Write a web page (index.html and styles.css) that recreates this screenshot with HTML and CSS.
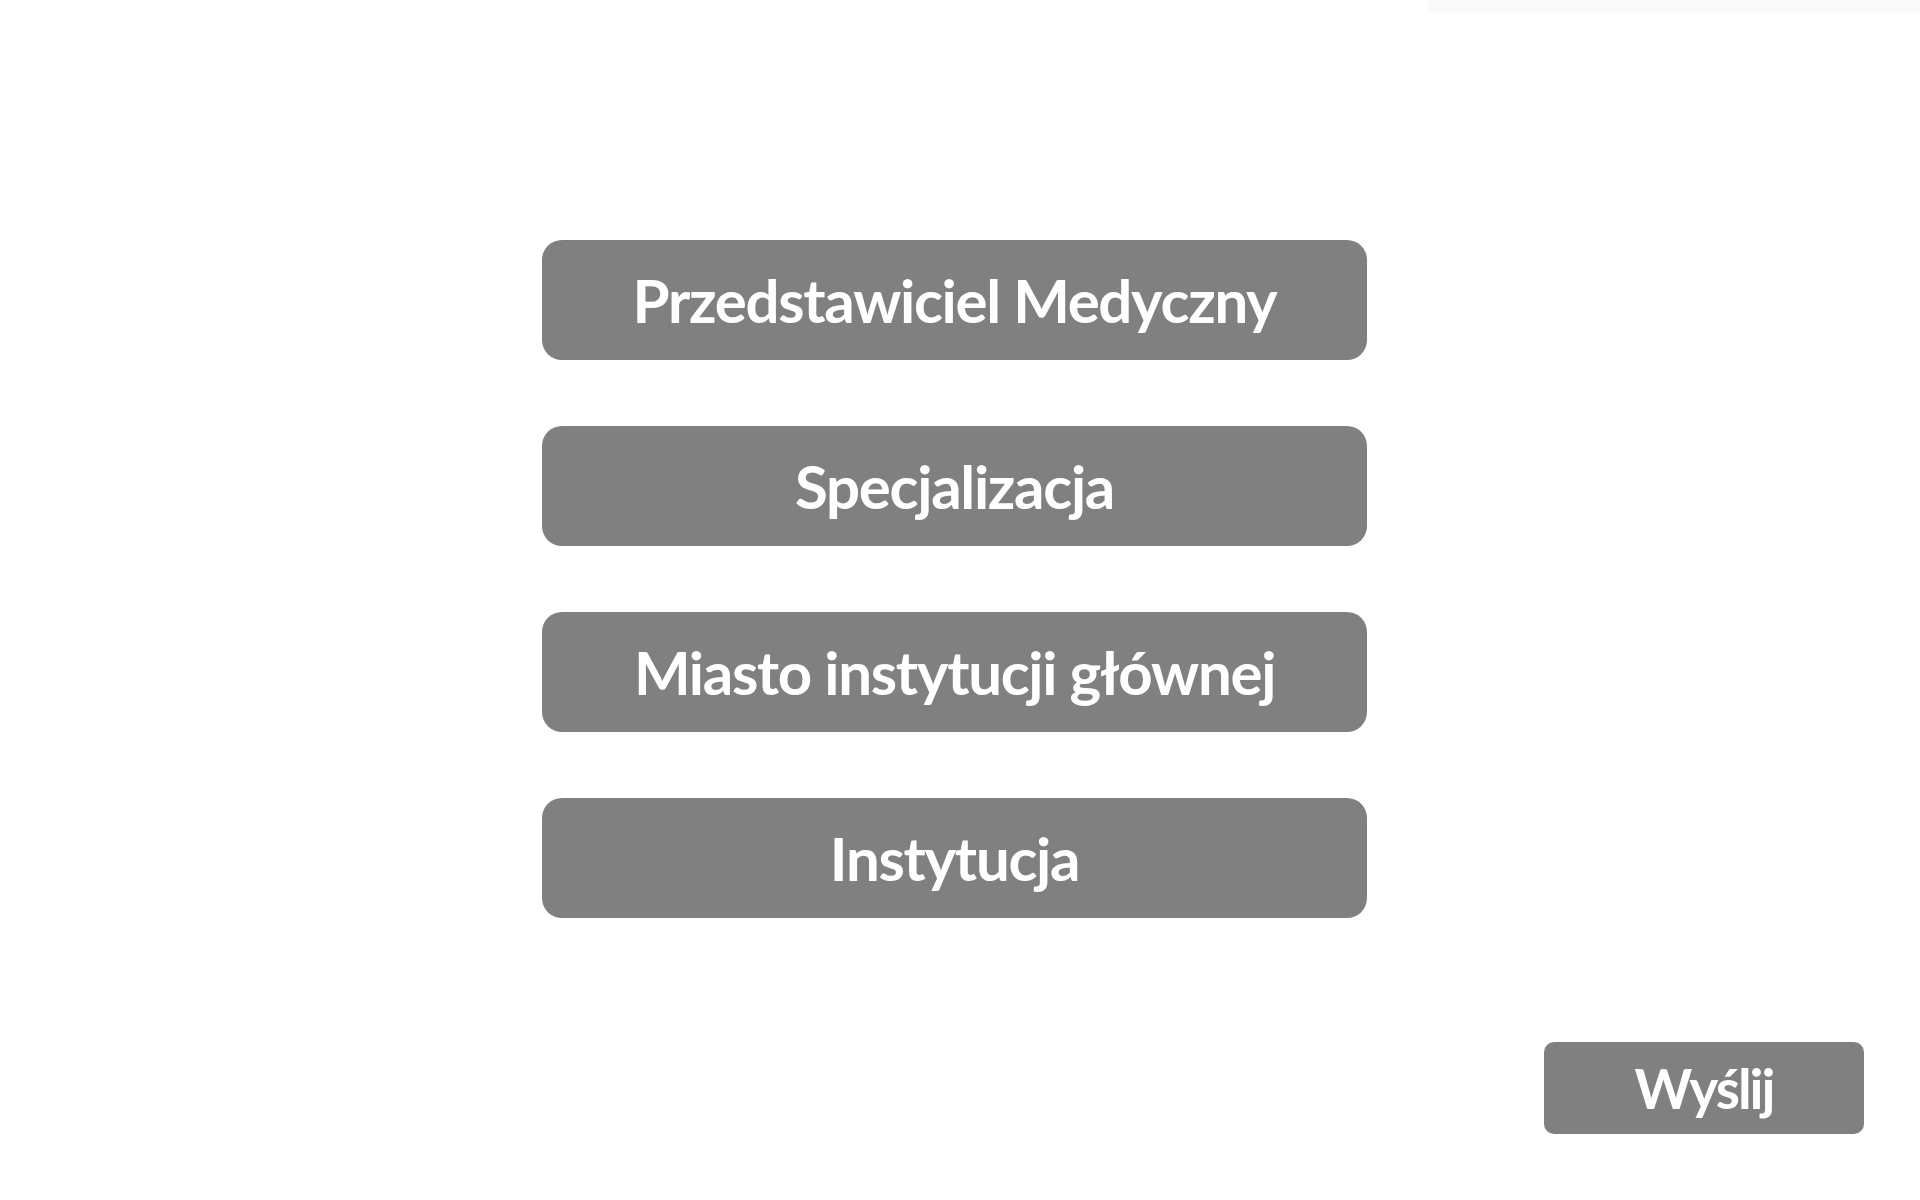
FILE: index.html
```html
<!DOCTYPE html>
<html lang="pl">
<head>
<meta charset="utf-8">
<title>Formularz</title>
<link rel="stylesheet" href="styles.css">
</head>
<body>
<div class="page">
  <div class="topbar"><div class="strip"></div></div>
  <div class="choices">
    <button class="choice">Przedstawiciel Medyczny</button>
    <button class="choice">Specjalizacja</button>
    <button class="choice">Miasto instytucji głównej</button>
    <button class="choice">Instytucja</button>
  </div>
  <div class="footer">
    <button class="send">Wyślij</button>
  </div>
</div>
</body>
</html>
```

FILE: styles.css
```css
html, body {
  margin: 0;
  padding: 0;
  background: #ffffff;
}
.page {
  width: 1920px;
  height: 1200px;
  display: flex;
  flex-direction: column;
}
.topbar {
  display: flex;
  justify-content: flex-end;
  height: 12px;
}
.strip {
  width: 492px;
  height: 12px;
  background: #fafafa;
}
.choices {
  display: flex;
  flex-direction: column;
  gap: 66px;
  padding-top: 228px;
  padding-left: 542px;
}
.choice {
  width: 825px;
  height: 120px;
  border: none;
  border-radius: 20px;
  background: #808080;
  color: #ffffff;
  font-family: "Lato", "Open Sans", sans-serif;
  font-weight: 700;
  font-size: 60px;
  letter-spacing: -1.3px;
  padding: 0;
  display: flex;
  align-items: center;
  justify-content: center;
  cursor: pointer;
}
.footer {
  display: flex;
  justify-content: flex-end;
  padding-top: 124px;
  padding-right: 56px;
}
.send {
  width: 320px;
  height: 92px;
  border: none;
  border-radius: 10px;
  background: #808080;
  color: #ffffff;
  font-family: "Lato", "Open Sans", sans-serif;
  font-weight: 700;
  font-size: 55px;
  letter-spacing: -2px;
  padding: 0;
  display: flex;
  align-items: center;
  justify-content: center;
  cursor: pointer;
}
```
